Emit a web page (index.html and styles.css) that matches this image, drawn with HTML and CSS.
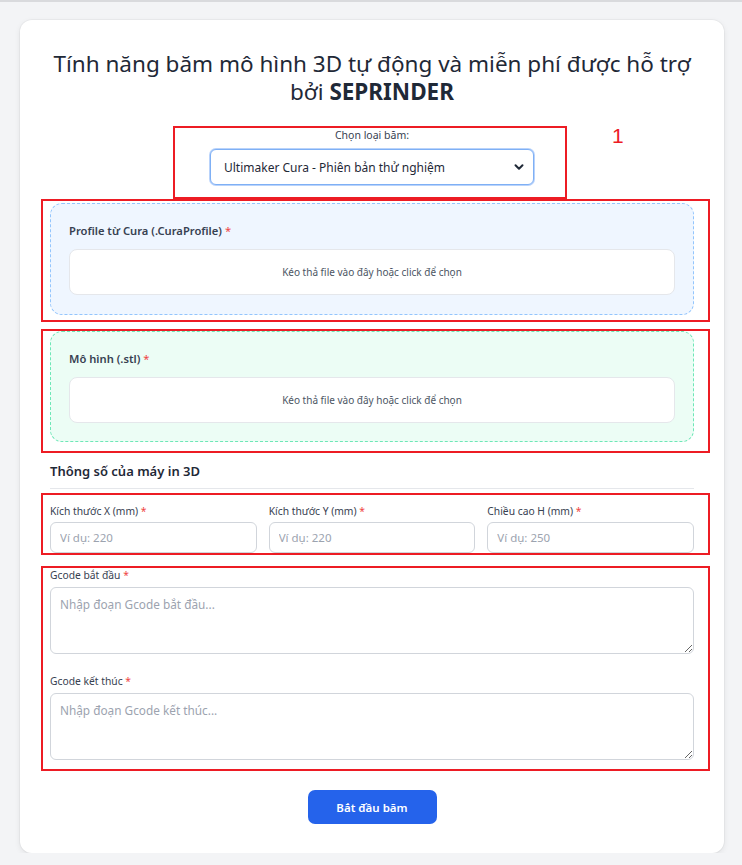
FILE: index.html
```html
<!DOCTYPE html>
<html lang="vi">
<head>
<meta charset="utf-8">
<title>SEPRINDER - Băm mô hình 3D</title>
<link rel="stylesheet" href="styles.css">
</head>
<body>
<div class="card">
  <h1 class="title">Tính năng băm mô hình 3D tự động và miễn phí được hỗ trợ bởi <strong>SEPRINDER</strong></h1>

  <div class="slicer">
    <label class="slicer-label" for="slicer">Chọn loại băm:</label>
    <div class="select-wrap">
      <select id="slicer" class="select">
        <option>Ultimaker Cura - Phiên bản thử nghiệm</option>
      </select>
      <svg class="chevron" width="12" height="12" viewBox="0 0 12 12"><path d="M2.5 4.2 L6 7.7 L9.5 4.2" fill="none" stroke="#1f2937" stroke-width="2" stroke-linecap="round" stroke-linejoin="round"/></svg>
    </div>
  </div>

  <div class="upload upload-blue">
    <div class="upload-label">Profile từ Cura (.CuraProfile) <span class="req">*</span></div>
    <div class="dropzone">Kéo thả file vào đây hoặc click để chọn</div>
  </div>

  <div class="upload upload-green">
    <div class="upload-label">Mô hình (.stl) <span class="req">*</span></div>
    <div class="dropzone">Kéo thả file vào đây hoặc click để chọn</div>
  </div>

  <h3 class="section-title">Thông số của máy in 3D</h3>

  <div class="dims">
    <div class="field">
      <label class="field-label">Kích thước X (mm) <span class="req">*</span></label>
      <input class="input" type="text" placeholder="Ví dụ: 220">
    </div>
    <div class="field">
      <label class="field-label">Kích thước Y (mm) <span class="req">*</span></label>
      <input class="input" type="text" placeholder="Ví dụ: 220">
    </div>
    <div class="field">
      <label class="field-label">Chiều cao H (mm) <span class="req">*</span></label>
      <input class="input" type="text" placeholder="Ví dụ: 250">
    </div>
  </div>

  <div class="field gcode-start">
    <label class="field-label">Gcode bắt đầu <span class="req">*</span></label>
    <textarea class="textarea" placeholder="Nhập đoạn Gcode bắt đầu..."></textarea>
  </div>

  <div class="field gcode-end">
    <label class="field-label">Gcode kết thúc <span class="req">*</span></label>
    <textarea class="textarea" placeholder="Nhập đoạn Gcode kết thúc..."></textarea>
  </div>

  <div class="actions">
    <button class="btn" type="button">Bắt đầu băm</button>
  </div>

  <div class="mark mark-1"></div>
  <div class="mark-num">1</div>
  <div class="mark mark-2"></div>
  <div class="mark mark-3"></div>
  <div class="mark mark-4"></div>
  <div class="mark mark-5"></div>
</div>
</body>
</html>
```
FILE: styles.css
```css
* { box-sizing: border-box; }
html, body { margin: 0; }
body {
  background: #f3f4f6;
  border-top: 2px solid #d9dadd;
  padding: 18px 18px 0 20px;
  font-family: "Noto Sans", "Open Sans", sans-serif;
  color: #1f2937;
}
.card {
  position: relative;
  width: 704px;
  height: 833px;
  background: #ffffff;
  border-radius: 12px;
  box-shadow: 0 2px 6px rgba(0,0,0,0.08), 0 0 0 1px rgba(0,0,0,0.03);
  padding: 30px 30px 31px 30px;
}
.title {
  margin: 0;
  font-size: 22.5px;
  line-height: 28px;
  font-weight: 400;
  text-align: center;
  color: #1f2937;
  padding: 0;
}
.title strong { font-weight: 700; }
.slicer {
  margin-top: 21px;
  display: flex;
  flex-direction: column;
  align-items: center;
}
.slicer-label {
  font-size: 10.5px;
  line-height: 16px;
  color: #374151;
}
.select-wrap {
  position: relative;
  margin-top: 6px;
  width: 324px;
}
.select {
  appearance: none;
  -webkit-appearance: none;
  width: 100%;
  height: 36px;
  border: 1px solid #7fb0f5;
  box-shadow: 0 0 0 1px #b9d3fb;
  border-radius: 6px;
  background: #fff;
  padding: 0 30px 0 13px;
  font-family: inherit;
  font-size: 12px;
  color: #1f2937;
}
.chevron {
  position: absolute;
  right: 9px;
  top: 12px;
  pointer-events: none;
}
.upload {
  border-radius: 12px;
  padding: 18px 18px 19px;
}
.upload-blue {
  margin-top: 18px;
  background: #eff6ff;
  border: 1px dashed #93c5fd;
}
.upload-green {
  margin-top: 16px;
  background: #ecfdf5;
  border: 1px dashed #6ee7b7;
  padding-bottom: 18px;
}
.upload-label {
  font-size: 11.2px;
  line-height: 18px;
  font-weight: 600;
  color: #374151;
  margin-bottom: 9px;
}
.req { color: #ef4444; font-weight: 400; }
.dropzone {
  height: 46px;
  background: #fff;
  border: 1px solid #e5e7eb;
  border-radius: 8px;
  display: flex;
  align-items: center;
  justify-content: center;
  font-size: 10px;
  color: #4b5563;
}
.section-title {
  margin: 19px 0 0;
  font-size: 13px;
  line-height: 20px;
  font-weight: 600;
  color: #1f2937;
  padding-bottom: 7px;
  border-bottom: 1px solid #e5e7eb;
}
.dims {
  margin-top: 14px;
  display: grid;
  grid-template-columns: repeat(3, 1fr);
  gap: 12px;
}
.field { display: flex; flex-direction: column; }
.field-label {
  font-size: 10.3px;
  line-height: 16px;
  color: #374151;
  margin-bottom: 3px;
}
.input {
  height: 31px;
  border: 1px solid #d1d5db;
  border-radius: 6px;
  padding: 0 9px;
  font-family: inherit;
  font-size: 11.5px;
  color: #1f2937;
  background: #fff;
}
.input::placeholder, .textarea::placeholder { color: #9ca3af; }
.gcode-start { margin-top: 14px; }
.gcode-end { margin-top: 19px; }
.gcode-start .field-label, .gcode-end .field-label { margin-bottom: 4px; }
.textarea {
  height: 67px;
  border: 1px solid #d1d5db;
  border-radius: 6px;
  padding: 8px 9px;
  font-family: inherit;
  font-size: 11.8px;
  line-height: 16px;
  color: #1f2937;
  resize: vertical;
  background: #fff;
}
.actions {
  margin-top: 30px;
  display: flex;
  justify-content: center;
}
.btn {
  width: 129px;
  height: 34px;
  border: none;
  border-radius: 7px;
  background: #2563eb;
  color: #fff;
  font-family: inherit;
  font-size: 11.5px;
  font-weight: 600;
}
.mark {
  position: absolute;
  border: 2px solid #ed1c24;
  pointer-events: none;
}
.mark-1 { left: 153px; top: 106px; width: 394px; height: 73px; }
.mark-2 { left: 21px; top: 179px; width: 669px; height: 123px; }
.mark-3 { left: 21px; top: 309px; width: 669px; height: 124px; }
.mark-4 { left: 21px; top: 473px; width: 669px; height: 62px; }
.mark-5 { left: 21px; top: 546px; width: 669px; height: 205px; }
.mark-num {
  position: absolute;
  left: 592px;
  top: 104px;
  font-family: "Liberation Sans", sans-serif;
  font-size: 21px;
  line-height: 24px;
  color: #ed1c24;
}
```
